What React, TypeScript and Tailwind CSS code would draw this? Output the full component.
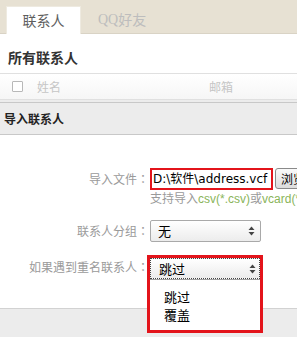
import React from "react";

const Arrows = () => (
  <svg width="7" height="10" viewBox="0 0 7 10" className="block shrink-0">
    <path d="M3.5 0.5 L6.5 4 L0.5 4 Z" fill="#444" />
    <path d="M3.5 9.5 L6.5 6 L0.5 6 Z" fill="#444" />
  </svg>
);

const Colon = () => <span className="font-['Noto_Sans_CJK_TC',sans-serif]">：</span>;

export default function App() {
  return (
    <div className="relative w-[297px] h-[337px] overflow-hidden bg-white font-['Noto_Sans_CJK_SC',sans-serif] text-[12px] flex flex-col">
      {/* tabs */}
      <div className="h-[34px] shrink-0 bg-[#e7e1d3] border-b border-[#d9d3c5] flex items-end pl-[6px]">
        <div className="w-[75px] h-[28px] shrink-0 bg-white border-t border-x border-[#eeeae0] flex items-center justify-center text-[14px] text-[#5e5e5e] -mb-px">
          联系人
        </div>
        <div className="ml-[17px] h-[28px] shrink-0 flex items-center text-[14px] text-[#bdbdbd]">
          <span className="font-['Liberation_Serif',serif]">QQ</span>
          <span>好友</span>
        </div>
      </div>

      {/* all contacts title */}
      <div className="h-[39px] shrink-0 pt-[13px] pl-[8px] leading-[20px] text-[14px] font-bold text-[#333]">
        所有联系人
      </div>

      {/* header row */}
      <div className="h-[27px] shrink-0 border-t border-b border-[#e0e0e0] bg-gradient-to-b from-white to-[#f6f6f6] flex items-center">
        <div className="ml-[12px] w-[11px] h-[11px] shrink-0 border border-[#b8b8b8] rounded-[1px] bg-white" />
        <span className="ml-[14px] shrink-0 text-[#c6c6c6]">姓名</span>
        <span className="ml-[148px] shrink-0 text-[#c6c6c6]">邮箱</span>
      </div>
      <div className="h-[2px] shrink-0 bg-[#ececec]" />

      {/* import band */}
      <div className="h-[33px] shrink-0 bg-[#ececec] border-t border-b border-[#c8c8c8] flex items-center pl-[4px] font-bold text-[#222]">
        导入联系人
      </div>

      {/* form */}
      <div className="h-[173px] shrink-0 bg-white flex flex-col pt-[33px]">
        <div className="flex items-center h-[21px]">
          <div className="w-[150px] shrink-0 text-right text-[#9a9a9a] pr-[1px] whitespace-nowrap">导入文件<Colon /></div>
          <div className="w-[123px] h-[22px] shrink-0 border-2 border-[#e3141b] bg-white flex items-center pl-[1px] font-['DejaVu_Sans','Noto_Sans_CJK_SC',sans-serif] text-[12px] text-black whitespace-nowrap overflow-hidden">
            D:\软件\address.vcf
          </div>
          <div className="ml-[2px] h-[21px] w-[40px] shrink-0 border border-[#8a8a8a] rounded-[3px] bg-gradient-to-b from-[#fafafa] to-[#dcdcdc] flex items-center pl-[5px] text-black whitespace-nowrap">
            浏览
          </div>
        </div>
        <div className="mt-[3px] h-[14px] leading-[14px] pl-[150px] whitespace-nowrap text-[#9a9a9a] font-['Liberation_Sans','Noto_Sans_CJK_SC',sans-serif] text-[12px]">
          支持导入<span className="text-[#8ab55a]">csv(*.csv)</span>或<span className="text-[#8ab55a]">vcard(*.vcf)</span>
        </div>
        <div className="mt-[14px] flex items-center h-[22px]">
          <div className="w-[150px] shrink-0 text-right text-[#9a9a9a] pr-[1px] whitespace-nowrap">联系人分组<Colon /></div>
          <div className="w-[111px] h-[22px] shrink-0 border border-[#a9a9a9] rounded-[2px] bg-gradient-to-b from-white to-[#ececec] flex items-center justify-between pl-[7px] pr-[5px] text-[13px] text-black">
            <span>无</span>
            <Arrows />
          </div>
        </div>
        <div className="mt-[14px] flex items-center h-[22px]">
          <div className="w-[150px] shrink-0 text-right text-[#9a9a9a] pr-[1px] whitespace-nowrap">如果遇到重名联系人<Colon /></div>
          <div className="relative w-[111px] h-[22px] shrink-0">
            <div className="absolute left-[-3px] top-[-1px] w-[116px] h-[78px] border-[3px] border-[#e3141b] bg-white z-10 flex flex-col">
              <div className="h-[21px] shrink-0 border border-dotted border-[#444] bg-gradient-to-b from-white to-[#ececec] flex items-center justify-between pl-[8px] pr-[3px] text-[13px] text-black">
                <span>跳过</span>
                <Arrows />
              </div>
              <div className="flex-1 border-t border-[#a0a0a0] bg-white pt-[8px] pl-[14px] text-[13px] text-black leading-[18px]">
                <div>跳过</div>
                <div>覆盖</div>
              </div>
            </div>
          </div>
        </div>
      </div>

      {/* footer */}
      <div className="flex-1 bg-[#ececec] border-t border-[#d2d2d2]" />
    </div>
  );
}
